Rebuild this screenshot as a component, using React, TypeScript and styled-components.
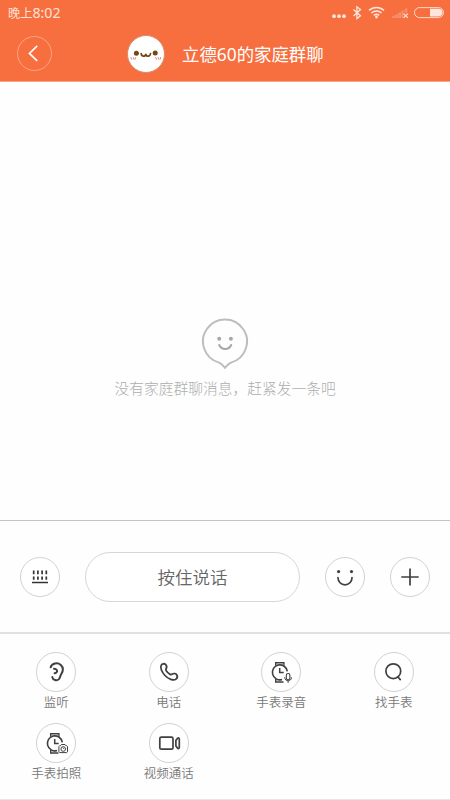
import React from 'react';
import styled, { createGlobalStyle } from 'styled-components';

const Global = createGlobalStyle`
  * { box-sizing: border-box; }
  body {
    margin: 0;
    background: #fff;
    font-family: "Noto Sans CJK SC", "Noto Sans", sans-serif;
  }
  svg { display: block; flex: none; }
`;

const Screen = styled.div`
  width: 450px;
  height: 800px;
  display: flex;
  flex-direction: column;
  overflow: hidden;
  background: #fefefe;
`;

const Header = styled.header`
  height: 82px;
  flex: none;
  background: #f76f3f;
  border-bottom: 1px solid #f9a688;
  color: #fff;
`;

const StatusBar = styled.div`
  height: 26px;
  padding: 0 5px 0 8px;
  display: flex;
  align-items: center;
  justify-content: space-between;
  color: #ffe2d6;
`;

const Clock = styled.div`
  display: flex;
  align-items: center;
  font-size: 12.2px;
  line-height: 24px;
`;

const Digits = styled.span`
  font-family: "Noto Sans", sans-serif;
  font-size: 14.2px;
  font-weight: 400;
`;

const TitleBar = styled.div`
  height: 55px;
  padding-left: 17px;
  display: flex;
  align-items: center;
`;

const BackButton = styled.button`
  width: 35px;
  height: 35px;
  padding: 0;
  border: 1px solid #fba585;
  border-radius: 50%;
  background: none;
  display: flex;
  align-items: center;
  justify-content: center;
`;

const Avatar = styled.div`
  width: 38px;
  height: 38px;
  margin-left: 74.5px;
  border-radius: 50%;
  border: 1px solid #d98c70;
  background: #fff;
  overflow: hidden;
`;

const Title = styled.h1`
  margin: 0 0 0 17.5px;
  font-family: "Noto Sans", "Noto Sans CJK SC", sans-serif;
  font-size: 17.4px;
  font-weight: 400;
  line-height: 28px;
  white-space: nowrap;
`;

const Messages = styled.main`
  flex: 1;
  display: flex;
  flex-direction: column;
  align-items: center;
  padding-top: 236px;
`;

const EmptyText = styled.p`
  margin: 5px 0 0;
  font-size: 14.75px;
  font-weight: 300;
  line-height: 26px;
  color: #adadad;
  white-space: nowrap;
`;

const InputBar = styled.div`
  height: 114px;
  flex: none;
  padding: 0 20px;
  border-top: 1px solid #c4c4c4;
  border-bottom: 2px solid #e0e0e0;
  display: flex;
  align-items: center;
`;

const Round = styled.button<{ $gap?: number }>`
  width: 40px;
  height: 40px;
  flex: none;
  padding: 0;
  margin-left: ${(p) => p.$gap ?? 0}px;
  border: 1px solid #d2d2d2;
  border-radius: 50%;
  background: #fff;
  display: flex;
  align-items: center;
  justify-content: center;
`;

const TalkButton = styled.button`
  width: 215px;
  height: 50px;
  margin-left: 25px;
  padding: 0;
  border: 1px solid #d6d6d6;
  border-radius: 25px;
  background: #fff;
  font-family: inherit;
  font-size: 17.5px;
  font-weight: 350;
  color: #666;
`;

const Actions = styled.div`
  height: 166px;
  flex: none;
  padding-top: 18px;
  border-bottom: 1px solid #e6e6e6;
  display: grid;
  grid-template-columns: repeat(4, 112.5px);
  grid-auto-rows: 71px;
`;

const Action = styled.div`
  display: flex;
  flex-direction: column;
  align-items: center;
`;

const ActionLabel = styled.span`
  font-size: 12.5px;
  font-weight: 350;
  line-height: 20px;
  color: #787878;
`;

const ink = '#404040';

const StatusIcons = () => (
  <svg width="113" height="18" viewBox="332 4 113 18" fill="none">
    <g fill="#ffe6dc">
      <circle cx="334" cy="16.2" r="1.9" />
      <circle cx="339" cy="16.2" r="1.9" />
      <circle cx="344" cy="16.2" r="1.9" />
    </g>
    <path d="M353.5 9.5l7 6.3-3.6 2.8V6.8l3.6 2.8-7 6.4" stroke="#ffe6dc" strokeWidth="1.3" />
    <g stroke="#ffe6dc" strokeWidth="1.5">
      <path d="M369 10.4a11 11 0 0 1 15 0" />
      <path d="M371.4 13a7.6 7.6 0 0 1 10.2 0" />
      <path d="M373.8 15.4a4.2 4.2 0 0 1 5.4 0" />
    </g>
    <circle cx="376.5" cy="17" r="1.4" fill="#ffe6dc" />
    <g fill="#f98f69">
      <path d="M392 18v-1.5l2.8-1.2V18zM395.2 18v-3l2.8-1.3V18zM398.4 18v-5l2.6-1.3V18zM401.4 18v-6.8l2.2-1.3V18zM404.6 12.5V9.2l2.6-1.5v4.8z" />
    </g>
    <path d="M403.6 13.6l4.3 4.3M407.9 13.6l-4.3 4.3" stroke="#ffe6dc" strokeWidth="1.2" />
    <rect x="414.5" y="7.6" width="29" height="10" rx="5" stroke="#ffd9ca" />
    <path d="M430 8.8h8.7a3.8 3.8 0 0 1 0 7.6H430z" fill="#ffe6dc" />
  </svg>
);

const AvatarFace = () => (
  <svg width="36" height="36" viewBox="0 0 36 36" fill="none">
    <circle cx="8.4" cy="17.3" r="2.5" fill="#754811" />
    <circle cx="27.2" cy="17" r="2.5" fill="#754811" />
    <path d="M13.2 17.6c.4 3.4 4.3 3.4 4.6.2.3 3.2 4.2 3.2 4.7-.3" stroke="#754811" strokeWidth="1.7" strokeLinecap="round" />
    <path d="M2.8 21.2l1 2.4M5.2 21.2l.8 2.4M7.8 21.2L7 23.6M27.6 21.2l1 2.4M30 21.2l.8 2.4M32.8 21.2l-.8 2.4" stroke="#ed7c76" strokeWidth="1" />
  </svg>
);

const ChatBubble = () => (
  <svg width="50" height="52" viewBox="0 0 50 52" fill="none">
    <path d="M19 44.6A22 22 0 1 1 31 44.6C28.5 45.4 27 47.7 25 49.8C23 47.7 21.5 45.4 19 44.6Z" stroke="#bcbdc0" strokeWidth="2" />
    <circle cx="19.2" cy="20.8" r="2" fill="#a8a8ac" />
    <circle cx="30.9" cy="20.8" r="2" fill="#a8a8ac" />
    <path d="M19.2 27c2.4 5.3 9.6 5.3 12 0" stroke="#a8a8ac" strokeWidth="2" strokeLinecap="round" />
  </svg>
);

const KeyboardIcon = () => (
  <svg width="38" height="38" viewBox="0 0 38 38" fill="none" stroke="#333">
    <path d="M12.7 12.5v3.8M16.9 12.5v3.8M21.1 12.5v3.8M25.3 12.5v3.8M12.7 18.5v3.3M16.9 18.5v3.3M21.1 18.5v3.3M25.3 18.5v3.3" strokeWidth="1.7" />
    <path d="M11 24.5h16" strokeWidth="1.5" />
  </svg>
);

const SmileIcon = () => (
  <svg width="38" height="38" viewBox="0 0 38 38" fill="none">
    <circle cx="12.6" cy="13.6" r="1.6" fill={ink} />
    <circle cx="25.5" cy="13.6" r="1.6" fill={ink} />
    <path d="M12 19.6v.2a7 7 0 0 0 14 0v-.2" stroke={ink} strokeWidth="1.7" strokeLinecap="round" />
  </svg>
);

const PlusIcon = () => (
  <svg width="38" height="38" viewBox="0 0 38 38" stroke={ink} strokeWidth="1.7">
    <path d="M19 10.5v17M10.3 19h17.4" />
  </svg>
);

const EarIcon = () => (
  <svg width="38" height="38" viewBox="0 0 38 38" fill="none" stroke={ink} strokeWidth="2" strokeLinecap="round" strokeLinejoin="round">
    <path d="M13.6 14.3c1.4-4 7-5.2 10.2-2.4 2.9 2.7 2.2 6.5.4 9.4-1 1.6-1.2 3.4-2.3 4.8-2 2.1-6 1.2-6.6-2" />
    <path d="M17 15.8c2.6-.1 4.1 2.1 2.4 3.7-.6.5-1.2.7-1.8.7" />
  </svg>
);

const PhoneIcon = () => (
  <svg width="38" height="38" viewBox="0 0 38 38" fill="none" stroke={ink} strokeWidth="1.8" strokeLinejoin="round">
    <path d="M11.3 12.1c.8-1.4 3-1.8 4.2-.7 1.1 1.1 1.5 2.6.8 3.9-.5.9-.7 1.6-.1 2.5 1.1 1.6 2.3 2.7 3.9 3.6.9.5 1.5.1 2.3-.4 1.4-.8 3.6-.3 4.4 1 .8 1.4.4 3.2-.8 4.1-1.5 1.2-3.6.9-5.2.3-4.1-1.7-7.7-5.3-9.4-9.4-.7-1.7-.9-3.4-.1-4.9z" />
  </svg>
);

const WatchBase = () => (
  <>
    <path d="M13.7 12.7V9.7h8.2v3M13.7 26v3h7.8" strokeWidth="1.4" />
    <path d="M14 11.5h7.6M14 27.2h5.6" stroke="#999" strokeWidth=".8" />
    <path d="M25.3 18.3a7.5 7.5 0 1 0-5.2 8.2" strokeWidth="1.6" />
    <path d="M17.7 15v4.6h4" strokeWidth="1.5" />
  </>
);

const WatchMicIcon = () => (
  <svg width="38" height="38" viewBox="0 0 38 38" fill="none" stroke={ink}>
    <WatchBase />
    <rect x="24.3" y="20.5" width="3.6" height="6.2" rx="1.8" strokeWidth="1.1" />
    <path d="M22.7 24.4c0 4.5 6.8 4.5 6.8 0M26.1 27.8v2" strokeWidth="1" />
  </svg>
);

const WatchCameraIcon = () => (
  <svg width="38" height="38" viewBox="0 0 38 38" fill="none" stroke={ink}>
    <WatchBase />
    <path d="M23.6 21.7l.8-1.2h3.6l.8 1.2h.9l.8.8v5.3l-.8.8h-7l-.8-.8v-5.3l.8-.8z" strokeWidth="1" fill="#fff" />
    <circle cx="26.2" cy="25" r="2.3" strokeWidth="1" />
    <path d="M25.9 23.7l.9 1.1" strokeWidth="1" />
  </svg>
);

const SearchIcon = () => (
  <svg width="38" height="38" viewBox="0 0 38 38" fill="none" stroke={ink} strokeWidth="1.7">
    <circle cx="18.3" cy="18.2" r="7.4" />
    <path d="M22.3 23.3l3.4 3.8" />
  </svg>
);

const VideoIcon = () => (
  <svg width="38" height="38" viewBox="0 0 38 38" fill="none" stroke={ink} strokeWidth="1.7" strokeLinejoin="round">
    <rect x="9.8" y="13.2" width="13.2" height="12" rx="1.5" />
    <path d="M25.9 16.4l1.7-2.1c.7-.8 1.7-.4 1.7.6v8.6c0 1-1 1.4-1.7.6l-1.7-2.1z" />
  </svg>
);

const actions = [
  { label: '监听', Icon: EarIcon },
  { label: '电话', Icon: PhoneIcon },
  { label: '手表录音', Icon: WatchMicIcon },
  { label: '找手表', Icon: SearchIcon },
  { label: '手表拍照', Icon: WatchCameraIcon },
  { label: '视频通话', Icon: VideoIcon },
];

export default function App() {
  return (
    <Screen>
      <Global />
      <Header>
        <StatusBar>
          <Clock>晚上<Digits>8:02</Digits></Clock>
          <StatusIcons />
        </StatusBar>
        <TitleBar>
          <BackButton aria-label="返回">
            <svg width="33" height="33" viewBox="0 0 33 33" fill="none" stroke="#fff" strokeWidth="1.6">
              <path d="M19.2 8.9l-7.8 7.5 7.8 7.5" />
            </svg>
          </BackButton>
          <Avatar><AvatarFace /></Avatar>
          <Title>立德60的家庭群聊</Title>
        </TitleBar>
      </Header>
      <Messages>
        <ChatBubble />
        <EmptyText>没有家庭群聊消息，赶紧发一条吧</EmptyText>
      </Messages>
      <InputBar>
        <Round aria-label="键盘"><KeyboardIcon /></Round>
        <TalkButton>按住说话</TalkButton>
        <Round $gap={25} aria-label="表情"><SmileIcon /></Round>
        <Round $gap={25} aria-label="更多"><PlusIcon /></Round>
      </InputBar>
      <Actions>
        {actions.map(({ label, Icon }) => (
          <Action key={label}>
            <Round aria-label={label}><Icon /></Round>
            <ActionLabel>{label}</ActionLabel>
          </Action>
        ))}
      </Actions>
    </Screen>
  );
}
